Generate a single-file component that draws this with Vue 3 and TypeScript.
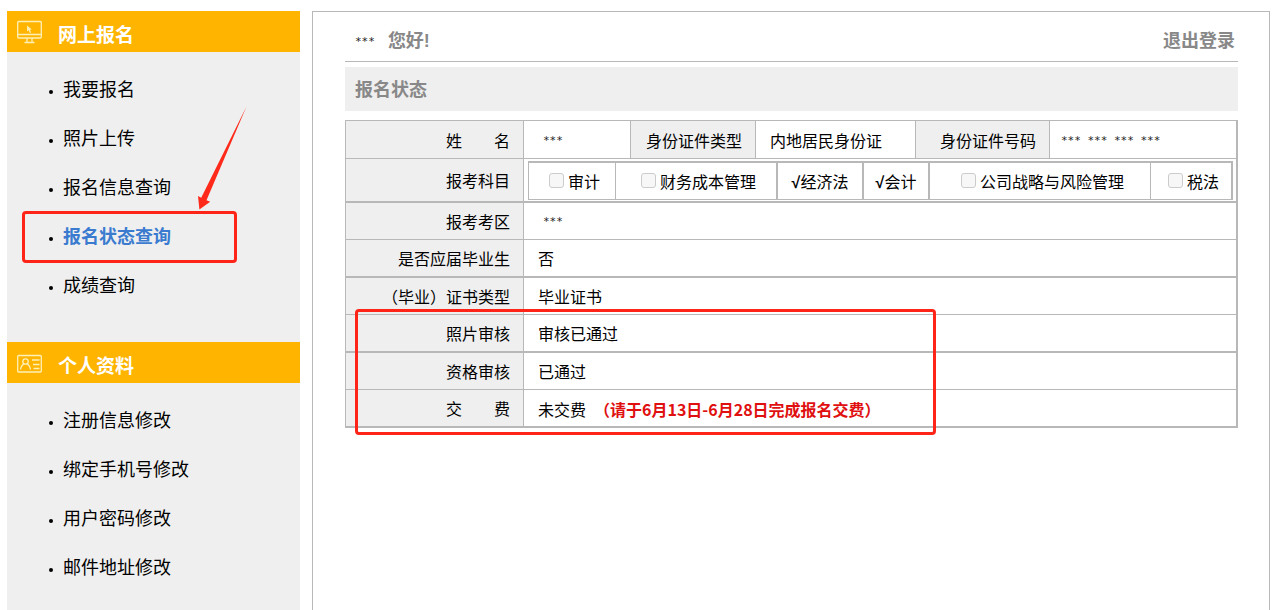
<script setup lang="ts">
interface NavItem {
  label: string
  active?: boolean
}
interface NavGroup {
  title: string
  icon: 'monitor' | 'card'
  items: NavItem[]
}
interface Subject {
  name: string
  chosen: boolean
  cls: string
}
interface StatusRow {
  label: string
  value: string
  masked?: boolean
  note?: string
}

const groups: NavGroup[] = [
  {
    title: '网上报名',
    icon: 'monitor',
    items: [
      { label: '我要报名' },
      { label: '照片上传' },
      { label: '报名信息查询' },
      { label: '报名状态查询', active: true },
      { label: '成绩查询' },
    ],
  },
  {
    title: '个人资料',
    icon: 'card',
    items: [
      { label: '注册信息修改' },
      { label: '绑定手机号修改' },
      { label: '用户密码修改' },
      { label: '邮件地址修改' },
    ],
  },
]

const subjects: Subject[] = [
  { name: '审计', chosen: false, cls: 'audit' },
  { name: '财务成本管理', chosen: false, cls: 'finance' },
  { name: '经济法', chosen: true, cls: 'law thick' },
  { name: '会计', chosen: true, cls: 'accounting thick' },
  { name: '公司战略与风险管理', chosen: false, cls: 'strategy thick' },
  { name: '税法', chosen: false, cls: 'tax' },
]

const rows: StatusRow[] = [
  { label: '报考考区', value: '***', masked: true },
  { label: '是否应届毕业生', value: '否' },
  { label: '（毕业）证书类型', value: '毕业证书' },
  { label: '照片审核', value: '审核已通过' },
  { label: '资格审核', value: '已通过' },
  { label: '交　　费', value: '未交费', note: '（请于6月13日-6月28日完成报名交费）' },
]
</script>

<template>
  <div class="page">
    <aside class="sidebar">
      <nav v-for="group in groups" :key="group.title" class="group" :aria-label="group.title">
        <h2 class="group-title">
          <svg v-if="group.icon === 'monitor'" class="icon" width="25" height="24" viewBox="0 0 25 24" fill="none" stroke="#fff0b8" stroke-width="1.3" aria-hidden="true">
            <rect x=".7" y="1.500" width="23.600" height="16.500" rx="1" />
            <path d="M1 14.500h23M10 18v4M15 18v4M7.500 22.500h10" />
            <path d="M10 5.500l4.800 4-1.900.3 1.200 2.600-1.200.5-1.200-2.600-1.600 1.200z" fill="#fff0b8" stroke="none" />
          </svg>
          <svg v-else class="icon" width="25" height="24" viewBox="0 0 25 24" fill="none" stroke="#fff0b8" stroke-width="1.3" aria-hidden="true">
            <rect x=".7" y="4.500" width="23.600" height="16.500" rx="1" />
            <circle cx="8.500" cy="10.500" r="2.700" />
            <path d="M3.500 18.500c.5-3 2-5 3.500-5.700M10 12.800c1.800.7 3 2.700 3.500 5.700M15 9h7.500M16 13.500h6.500M16.500 17.500h6" />
          </svg>
          <span class="group-name">{{ group.title }}</span>
        </h2>
        <ul class="list">
          <li v-for="item in group.items" :key="item.label" class="item">
            <a href="#" class="link" :class="{ active: item.active }">{{ item.label }}</a>
          </li>
        </ul>
      </nav>
      <div class="mark mark-nav"></div>
      <svg class="arrow" width="54" height="108" viewBox="0 0 54 108" aria-hidden="true">
        <path d="M49.500.5L9.500 94.300l3.700 1.500L2.400 103.500 1 90l3.200 1.800z" fill="#ff2a1a" />
      </svg>
    </aside>

    <main class="panel">
      <header class="top">
        <p class="greeting"><span class="masked">***</span><strong>您好!</strong></p>
        <a href="#" class="logout">退出登录</a>
      </header>
      <h1 class="title">报名状态</h1>

      <div class="table-wrap">
        <table class="status">
          <colgroup>
            <col class="c-label" />
            <col class="c-name" />
            <col class="c-type" />
            <col class="c-idtype" />
            <col class="c-number" />
            <col />
          </colgroup>
          <tbody>
            <tr class="first">
              <th scope="row">姓　　名</th>
              <td class="indent"><span class="masked">***</span></td>
              <th scope="row">身份证件类型</th>
              <td>内地居民身份证</td>
              <th scope="row">身份证件号码</th>
              <td class="number"><span class="masked">*** *** *** ***</span></td>
            </tr>
            <tr class="subject-row">
              <th scope="row">报考科目</th>
              <td colspan="5" class="holder">
                <table class="subjects">
                  <tbody>
                    <tr>
                      <td v-for="subject in subjects" :key="subject.name" :class="subject.cls">
                        <span v-if="subject.chosen"><b class="tick">√</b>{{ subject.name }}</span>
                        <label v-else class="choice"><input type="checkbox" disabled />{{ subject.name }}</label>
                      </td>
                    </tr>
                  </tbody>
                </table>
              </td>
            </tr>
            <tr v-for="row in rows" :key="row.label" class="plain">
              <th scope="row">{{ row.label }}</th>
              <td colspan="5" :class="{ indent: row.masked }">
                <span :class="{ masked: row.masked }">{{ row.value }}</span>
                <strong v-if="row.note" class="note">{{ row.note }}</strong>
              </td>
            </tr>
          </tbody>
        </table>
        <div class="mark mark-table"></div>
      </div>
    </main>
  </div>
</template>

<style>
body {
  margin: 0;
  background: #fff;
}
</style>

<style scoped>
.page {
  box-sizing: border-box;
  display: flex;
  gap: 12px;
  min-height: 100vh;
  padding: 11px 6px 0 7px;
  font-family: "Liberation Sans", "Noto Sans CJK SC", sans-serif;
  font-size: 16px;
  color: #000;
}
.sidebar {
  position: relative;
  flex: 0 0 293px;
  background: #efefef;
}
.group + .group {
  margin-top: 32px;
}
.group-title {
  box-sizing: border-box;
  display: flex;
  align-items: center;
  gap: 16px;
  height: 41px;
  margin: 0;
  padding: 5px 10px 0;
  background: #ffb400;
  color: #fff;
  font-size: 19px;
  line-height: 24px;
}
.group-name {
  padding-top: 3px;
}
.icon {
  margin-bottom: 4px;
}
.list {
  margin: 0;
  padding: 13px 0 0;
  list-style: none;
}
.item {
  display: flex;
  align-items: center;
  height: 49px;
  padding-left: 42px;
}
.item::before {
  content: "";
  width: 4px;
  height: 4px;
  margin: 4px 10px 0 0;
  border-radius: 50%;
  background: #000;
}
.link {
  color: #000;
  font-size: 18px;
  line-height: 24px;
  text-decoration: none;
}
.link.active {
  color: #3a7bd0;
  font-weight: bold;
}
.mark {
  position: absolute;
  box-sizing: border-box;
  border: 3px solid #ff2418;
  border-radius: 4px;
  pointer-events: none;
}
.mark-nav {
  top: 200px;
  left: 15px;
  width: 215px;
  height: 52px;
}
.arrow {
  position: absolute;
  top: 95px;
  left: 190px;
}
.panel {
  flex: 1;
  min-width: 0;
  padding: 0 31px 0 32px;
  border: 1px solid #b8b8b8;
  border-bottom: 0;
}
.top {
  display: flex;
  align-items: center;
  justify-content: space-between;
  height: 49px;
  padding: 0 3px 0 10px;
  border-bottom: 1px solid #b8b8b8;
}
.greeting {
  display: flex;
  align-items: center;
  gap: 13px;
  margin: 0;
  padding-top: 9px;
}
.greeting strong,
.logout,
.title {
  color: #888;
  font-size: 18px;
  font-weight: bold;
  line-height: 24px;
}
.logout {
  padding-top: 9px;
  text-decoration: none;
}
.masked {
  color: #222;
  font-family: "DejaVu Sans Mono", monospace;
  font-size: 11px;
}
.title {
  margin: 5px 0 9px;
  padding: 11px 10px 9px;
  background: #efefef;
}
.table-wrap {
  position: relative;
}
table {
  width: 100%;
  border-spacing: 0;
  table-layout: fixed;
}
th,
td {
  box-sizing: border-box;
  padding: 4px 0 0 14px;
  border: 0 solid #b8b8b8;
  line-height: 20px;
  text-align: left;
}
.status > tbody > tr > * {
  border-left-width: 1px;
  border-bottom-width: 1px;
}
.status > tbody > tr > :last-child {
  border-right-width: 2px;
}
.status > tbody > tr.subject-row > *,
.status > tbody > tr.plain:nth-child(even) > * {
  border-bottom-width: 2px;
}
.status > tbody > tr.first > * {
  border-top-width: 1px;
}
th {
  padding: 4px 13px 0 0;
  background: #efefef;
  font-weight: normal;
  text-align: right;
}
.c-label { width: 178px; }
.c-name { width: 107px; }
.c-type { width: 125px; }
.c-idtype { width: 160px; }
.c-number { width: 134px; }
.first { height: 39px; }
.subject-row { height: 44px; }
.plain { height: 37px; }
.plain:nth-child(even) { height: 38px; }
.status td.indent { padding: 0 0 0 19px; }
.status td.number { padding: 0 0 0 11px; }
.status td.holder { padding: 2px 3px 1px 4px; }
.subjects td {
  height: 39px;
  padding: 4px 0 0;
  border-width: 2px 0 1px 1px;
  text-align: center;
}
.subjects td.thick { border-left-width: 2px; }
.subjects td:last-child { border-right-width: 2px; }
.audit { width: 87px; }
.finance { width: 161px; }
.law { width: 86px; }
.accounting { width: 66px; }
.strategy { width: 222px; }
.choice {
  display: inline-flex;
  align-items: flex-start;
  gap: 4px;
  padding-left: 5px;
  vertical-align: middle;
}
.choice input {
  appearance: none;
  box-sizing: border-box;
  width: 15px;
  height: 15px;
  margin: 0;
  border: 1px solid #ccc;
  border-radius: 3px;
  background: #f7f7f7;
}
.tick {
  font-family: "Liberation Sans", sans-serif;
}
.note {
  margin-left: 8px;
  color: #e00f10;
  font-family: "Noto Sans CJK SC", sans-serif;
}
.mark-table {
  top: 189px;
  left: 10px;
  width: 581px;
  height: 126px;
}
</style>
